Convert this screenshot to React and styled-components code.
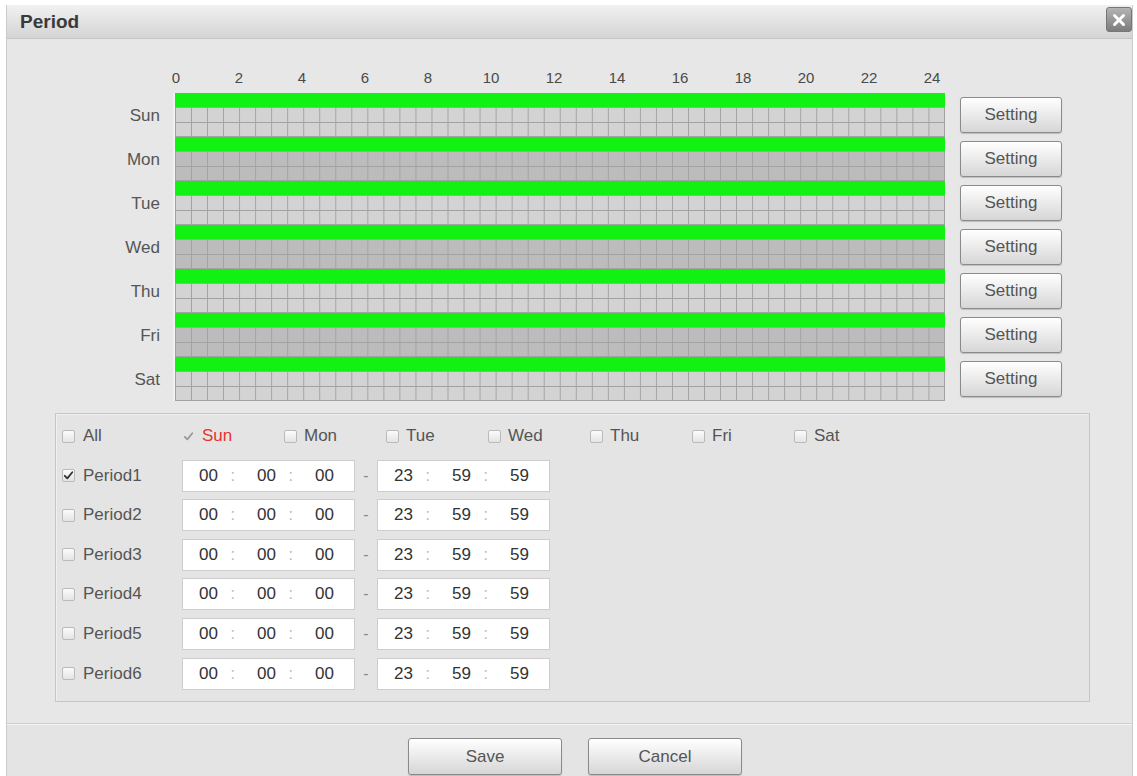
import React from 'react';
import styled, { createGlobalStyle } from 'styled-components';

const Global = createGlobalStyle`
  html, body { margin: 0; padding: 0; background: #fff; }
  body { font-family: "Liberation Sans", Arial, sans-serif; }
  * { box-sizing: border-box; }
`;

const Page = styled.div`
  width: 1137px;
  height: 776px;
  overflow: hidden;
  background: #fff;
  padding: 5px 0 0 6px;
`;

const Dialog = styled.div`
  width: 1127px;
  height: 771px;
  background: #e7e7e7;
  border-left: 1px solid #cbcbcb;
  border-right: 1px solid #cbcbcb;
  display: flex;
  flex-direction: column;
`;

const TitleBar = styled.div`
  height: 34px;
  flex: none;
  display: flex;
  justify-content: space-between;
  align-items: center;
  padding-left: 13px;
  background: linear-gradient(#f1f1f1, #d4d4d4);
  border-bottom: 1px solid #c4c4c4;
`;

const Title = styled.div`
  font-size: 19px;
  font-weight: bold;
  color: #3a3a3a;
`;

const CloseButton = styled.div`
  width: 26px;
  height: 25px;
  align-self: flex-start;
  margin-top: 2px;
  border-radius: 3px;
  border: 1px solid #767676;
  background: linear-gradient(#b4b4b4, #7c7c7c);
  display: flex;
  align-items: center;
  justify-content: center;
`;

const Body = styled.div`
  padding-top: 31px;
  display: flex;
  flex-direction: column;
`;

const HourRow = styled.div`
  display: flex;
  padding-left: 137.5px;
  height: 16px;
`;

const HourLabel = styled.div`
  width: 63px;
  flex: none;
  text-align: center;
  font-size: 15px;
  line-height: 16px;
  color: #4a4a4a;
`;

const DayList = styled.div`
  margin-top: 7px;
  display: flex;
  flex-direction: column;
`;

const DayRow = styled.div`
  display: grid;
  grid-template-columns: 153px 770px 102px;
  column-gap: 15px;
  height: 44px;
  align-items: center;
`;

const DayLabel = styled.div`
  text-align: right;
  font-size: 17px;
  color: #555;
  padding-top: 2px;
`;

const Timeline = styled.div`
  height: 44px;
  display: flex;
  flex-direction: column;
  box-shadow: -2px 0 0 #f2f2f2;
`;

const ActiveBar = styled.div`
  height: 14px;
  flex: none;
  background: #12f212;
`;

const Cells = styled.div`
  flex: 1;
  background-color: ${p => (p.$dark ? '#bcbcbc' : '#d3d3d3')};
  background-image:
    linear-gradient(to right, #a2a2a2 0 1px, transparent 1px),
    linear-gradient(to bottom, #a2a2a2 0 1px, transparent 1px);
  background-size: calc(770px / 48) 100%, 100% 15px;
  border-right: 1px solid #a2a2a2;
  border-bottom: 1px solid #a2a2a2;
`;

const GrayButton = styled.div`
  height: ${p => p.$h || 36}px;
  width: ${p => (p.$w ? p.$w + 'px' : 'auto')};
  border: 1px solid #8a8a8a;
  border-radius: 3px;
  background: linear-gradient(#ffffff, #d6d6d6);
  box-shadow: inset 0 1px 0 #fff, 0 1px 1px rgba(0, 0, 0, 0.18);
  color: #555;
  font-size: 17px;
  display: flex;
  align-items: center;
  justify-content: center;
`;

const Panel = styled.div`
  margin: 12px 42px 0 48px;
  height: 289px;
  border: 1px solid #c6c6c6;
  box-shadow: inset 1px 1px 0 #f0f0f0;
  background: #e4e4e4;
  padding: 6px 0 0 6px;
  display: flex;
  flex-direction: column;
  gap: 7.6px;
`;

const FormRow = styled.div`
  height: 32px;
  display: flex;
  align-items: center;
`;

const FirstCol = styled.div`
  width: 120px;
  flex: none;
  display: flex;
  align-items: center;
  gap: 8px;
`;

const WeekItem = styled.div`
  width: 102px;
  flex: none;
  display: flex;
  align-items: center;
  gap: 7px;
`;

const Label = styled.span`
  font-size: 17px;
  color: ${p => (p.$active ? '#e8342f' : '#555')};
`;

const Box = styled.span`
  width: 13px;
  height: 13px;
  flex: none;
  border-radius: 2px;
  border: 1px solid ${p => (p.$bare ? 'transparent' : '#bababa')};
  background: ${p => (p.$bare ? 'transparent' : 'linear-gradient(#fbfbfb, #e4e4e4)')};
  display: flex;
  align-items: center;
  justify-content: center;
`;

const TimeBox = styled.div`
  width: 173px;
  height: 32px;
  flex: none;
  background: #fff;
  border: 1px solid #cdcdcd;
  display: flex;
  align-items: center;
  padding-left: 5.5px;
`;

const Num = styled.span`
  width: 40px;
  text-align: center;
  font-size: 17px;
  color: #333;
`;

const Colon = styled.span`
  width: 18px;
  padding-left: 2px;
  font-size: 16px;
  color: #b9b9b9;
`;

const Dash = styled.span`
  width: 22px;
  flex: none;
  text-align: center;
  font-size: 16px;
  color: #888;
`;

const Footer = styled.div`
  margin-top: 21px;
  flex: 1;
  border-top: 1px solid #cfcfcf;
  box-shadow: inset 0 1px 0 #f4f4f4;
  background: #e4e4e4;
  display: flex;
  justify-content: center;
  align-items: flex-start;
  gap: 26px;
  padding: 14px 0 0 11px;
`;

const Check = ({ color = '#333' }) => (
  <svg width="11" height="11" viewBox="0 0 11 11">
    <path d="M1.8 5.8 L4.3 8.4 L9.3 2.2" fill="none" stroke={color} strokeWidth="1.8" strokeLinecap="round" strokeLinejoin="round" />
  </svg>
);

const CheckBox = ({ checked, bare, color }) => (
  <Box $bare={bare}>{checked && <Check color={color} />}</Box>
);

const days = ['Sun', 'Mon', 'Tue', 'Wed', 'Thu', 'Fri', 'Sat'];
const hours = [0, 2, 4, 6, 8, 10, 12, 14, 16, 18, 20, 22, 24];

const TimeField = ({ values }) => (
  <TimeBox>
    <Num>{values[0]}</Num>
    <Colon>:</Colon>
    <Num>{values[1]}</Num>
    <Colon>:</Colon>
    <Num>{values[2]}</Num>
  </TimeBox>
);

export default function App() {
  return (
    <>
      <Global />
      <Page>
        <Dialog>
          <TitleBar>
            <Title>Period</Title>
            <CloseButton>
              <svg width="14" height="14" viewBox="0 0 14 14">
                <path d="M2.5 2.5 L11.5 11.5 M11.5 2.5 L2.5 11.5" stroke="#fff" strokeWidth="3" strokeLinecap="round" />
              </svg>
            </CloseButton>
          </TitleBar>
          <Body>
            <HourRow>
              {hours.map(h => (
                <HourLabel key={h}>{h}</HourLabel>
              ))}
            </HourRow>
            <DayList>
              {days.map((d, i) => (
                <DayRow key={d}>
                  <DayLabel>{d}</DayLabel>
                  <Timeline>
                    <ActiveBar />
                    <Cells $dark={i % 2 === 1} />
                  </Timeline>
                  <GrayButton>Setting</GrayButton>
                </DayRow>
              ))}
            </DayList>
            <Panel>
              <FormRow>
                <FirstCol>
                  <CheckBox />
                  <Label>All</Label>
                </FirstCol>
                {days.map((d, i) => (
                  <WeekItem key={d}>
                    {i === 0 ? <CheckBox bare checked color="#9a9a9a" /> : <CheckBox />}
                    <Label $active={i === 0}>{d}</Label>
                  </WeekItem>
                ))}
              </FormRow>
              {[1, 2, 3, 4, 5, 6].map(n => (
                <FormRow key={n}>
                  <FirstCol>
                    <CheckBox checked={n === 1} />
                    <Label>Period{n}</Label>
                  </FirstCol>
                  <TimeField values={['00', '00', '00']} />
                  <Dash>-</Dash>
                  <TimeField values={['23', '59', '59']} />
                </FormRow>
              ))}
            </Panel>
          </Body>
          <Footer>
            <GrayButton $w={154} $h={37}>Save</GrayButton>
            <GrayButton $w={154} $h={37}>Cancel</GrayButton>
          </Footer>
        </Dialog>
      </Page>
    </>
  );
}
